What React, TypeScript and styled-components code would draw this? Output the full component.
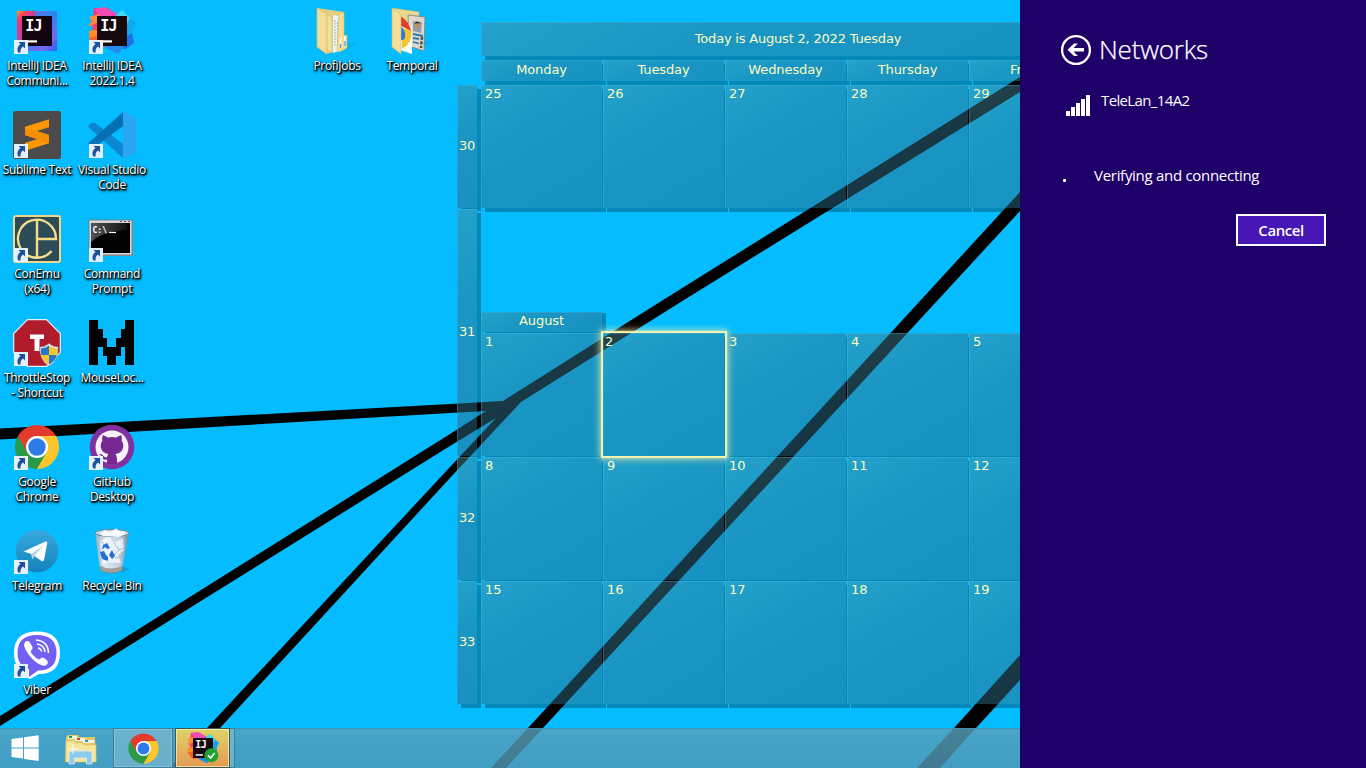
import React from 'react';
import styled, { createGlobalStyle, css } from 'styled-components';

const GlobalStyle = createGlobalStyle`
  * { box-sizing: border-box; }
  html, body { margin: 0; padding: 0; overflow: hidden; }
`;

const Screen = styled.div`
  position: relative;
  display: flex;
  width: 1366px;
  height: 768px;
  overflow: hidden;
  background: #04bcff;
  font-family: 'Open Sans', 'Noto Sans', sans-serif;
`;

const WallpaperArt = styled.svg`
  position: absolute;
  inset: 0;
`;

const Main = styled.div`
  position: relative;
  display: flex;
  flex-direction: column;
  width: 1020px;
  height: 768px;
  overflow: hidden;
`;

const Desktop = styled.div`
  display: flex;
  height: 728px;
`;

const IconGrid = styled.div<{ $rows: number; $width: number }>`
  display: grid;
  grid-auto-flow: column;
  grid-template-rows: repeat(${(p) => p.$rows}, 104px);
  grid-auto-columns: 74px;
  column-gap: 1px;
  flex: none;
  align-content: start;
  width: ${(p) => p.$width}px;
`;

const Shortcut = styled.div`
  display: flex;
  flex-direction: column;
  align-items: center;
  padding-top: 7px;
`;

const IconBox = styled.div`
  position: relative;
  width: 48px;
  height: 48px;
`;

const ArrowBadge = styled.svg`
  position: absolute;
  left: 1px;
  top: 33px;
`;

const Label = styled.div`
  margin-top: 3px;
  display: flex;
  flex-direction: column;
  align-items: center;
  color: #fff;
  font-size: 12px;
  line-height: 15px;
  white-space: nowrap;
  text-shadow: 1px 1px 1px #000, 1px 1px 2px #000, 0 1px 2px rgba(0, 0, 0, 0.85), 1px 2px 3px rgba(0, 0, 0, 0.8);
`;

const LabelLine = styled.span`
  letter-spacing: -0.3px;
`;

/* ---------- calendar ---------- */

const Calendar = styled.div`
  display: grid;
  grid-template-columns: 24px 634px;
  flex: none;
  height: 708px;
  margin-top: 22px;
  color: #fdfbc0;
  font: 13px/15px 'DejaVu Sans', Verdana, sans-serif;
`;

const glass = css`
  background: linear-gradient(150deg, rgba(68, 136, 150, 0.5), rgba(50, 114, 138, 0.5) 35%, rgba(40, 102, 130, 0.5));
  box-shadow: inset 1px 1px 0 rgba(90, 190, 225, 0.3);
`;

const WeekColumn = styled.div`
  display: flex;
  flex-direction: column;
  gap: 1px;
  padding-top: 63px;
`;

const WeekCell = styled.div<{ $height: number; $last?: boolean }>`
  ${glass}
  position: relative;
  display: flex;
  align-items: center;
  justify-content: center;
  width: 20px;
  height: ${(p) => p.$height}px;
  padding-bottom: 2px;
  letter-spacing: -0.3px;
  &::before {
    content: '';
    position: absolute;
    left: 20px;
    top: 4px;
    width: 4px;
    height: ${(p) => p.$height - 1}px;
    background: rgba(0, 0, 0, 0.27);
  }
  &::after {
    content: '';
    position: absolute;
    left: 4px;
    top: 100%;
    width: ${(p) => (p.$last ? 20 : 16)}px;
    height: ${(p) => (p.$last ? 4 : 1)}px;
    background: rgba(0, 0, 0, 0.27);
  }
  ${(p) => p.$last && css`&::before { height: 119px; }`}
`;

const Days = styled.div`
  display: flex;
  flex-direction: column;
`;

const TodayBar = styled.div`
  ${glass}
  position: relative;
  display: flex;
  align-items: center;
  justify-content: center;
  height: 34px;
  margin-bottom: 4px;
  padding-bottom: 2px;
  letter-spacing: -0.2px;
  &::after {
    content: '';
    position: absolute;
    left: 4px;
    top: 100%;
    right: 0;
    height: 4px;
    background: rgba(0, 0, 0, 0.27);
  }
`;

const Row = styled.div<{ $height: number }>`
  display: flex;
  gap: 1px;
  height: ${(p) => p.$height}px;
`;

const Cell = styled.div<{ $height: number; $drop: number; $head?: boolean; $today?: boolean }>`
  ${glass}
  position: relative;
  z-index: ${(p) => (p.$today ? 1 : 0)};
  flex: none;
  width: 121px;
  height: ${(p) => p.$height}px;
  padding: ${(p) => (p.$head ? '2px 0 0' : p.$today ? '1px 2px' : '1px 4px')};
  text-align: ${(p) => (p.$head ? 'center' : 'left')};
  letter-spacing: -0.1px;
  &::before {
    content: '';
    position: absolute;
    left: 121px;
    top: 4px;
    width: 1px;
    bottom: 0;
    background: rgba(0, 0, 0, 0.27);
  }
  &::after {
    content: '';
    position: absolute;
    left: 4px;
    top: 100%;
    width: 121px;
    height: ${(p) => p.$drop}px;
    background: rgba(0, 0, 0, 0.27);
  }
`;

const MonthTab = styled.div`
  ${glass}
  position: relative;
  width: 121px;
  height: 20px;
  margin: 100px 0 1px;
  padding-top: 1px;
  text-align: center;
  letter-spacing: -0.1px;
  &::before {
    content: '';
    position: absolute;
    left: 4px;
    top: 100%;
    width: 117px;
    height: 1px;
    background: rgba(0, 0, 0, 0.27);
  }
  &::after {
    content: '';
    position: absolute;
    left: 121px;
    top: 1px;
    width: 4px;
    height: 19px;
    background: rgba(0, 0, 0, 0.27);
  }
`;

const TodayGlow = styled.div`
  position: absolute;
  z-index: 1;
  inset: -1px -2px -1px -1px;
  border: 1px solid #fbf6ae;
  box-shadow: 0 0 1px 1px rgba(253, 248, 178, 0.8), 0 0 7px 2px rgba(255, 244, 170, 0.75);
`;

/* ---------- taskbar ---------- */

const Taskbar = styled.div`
  display: flex;
  height: 40px;
  background: linear-gradient(rgba(88, 160, 186, 0.81), rgba(80, 150, 180, 0.81));
  border-top: 1px solid #3f93b6;
`;

const StartButton = styled.div`
  width: 49px;
  padding: 6px 0 0 11px;
`;

const PinnedButton = styled.div`
  width: 64px;
  padding: 5px 0 0 15px;
`;

const RunningButton = styled.div`
  display: flex;
  align-items: center;
  justify-content: center;
  width: 60px;
  height: 40px;
  margin-top: -1px;
  border: 1px solid #397f9d;
  box-shadow: inset 0 0 0 1px rgba(160, 215, 235, 0.45);
  background: rgba(140, 190, 210, 0.55);
`;

const StackEdge = styled.div`
  display: flex;
  width: 60px;
  height: 40px;
  margin: -1px 0 0 2px;
  padding-right: 4px;
  border: 1px solid #397f9d;
  background: rgba(140, 190, 210, 0.6);
`;

const AlertButton = styled.div`
  display: flex;
  align-items: center;
  justify-content: center;
  flex: none;
  width: 55px;
  height: 40px;
  margin: -1px 0 0 -1px;
  border: 1px solid #3b5a5c;
  box-shadow: inset 0 0 0 1px rgba(255, 245, 180, 0.7);
  background: linear-gradient(#dcd468, #e4b35c 55%, #e39a52);
`;

/* ---------- networks panel ---------- */

const Panel = styled.aside`
  position: relative;
  width: 346px;
  height: 768px;
  padding: 34px 40px 0 40px;
  background: #1f0068;
  border-left: 1px solid #1a0758;
  color: #fff;
`;

const PanelHeader = styled.div`
  display: flex;
  align-items: center;
  height: 32px;
  gap: 7px;
  margin-left: -1px;
`;

const PanelTitle = styled.h1`
  margin: -3px 0 0;
  font-size: 26px;
  font-weight: 300;
  line-height: 32px;
  letter-spacing: -0.2px;
  -webkit-text-stroke: 0.25px #fff;
`;

const NetworkRow = styled.div`
  display: flex;
  gap: 11px;
  margin-top: 23px;
  padding-left: 5px;
  font-size: 15px;
  line-height: 22px;
  letter-spacing: -0.63px;
`;

const SignalBars = styled.svg`
  margin-top: 1px;
`;

const StatusRow = styled.div`
  display: flex;
  align-items: center;
  gap: 28px;
  margin-top: 48px;
  padding-left: 2px;
  font-size: 15px;
  line-height: 22px;
  letter-spacing: -0.29px;
`;

const ProgressDot = styled.span`
  width: 3px;
  height: 3px;
  margin-top: 11px;
  border-radius: 1px;
  background: #fff;
`;

const CancelButton = styled.button`
  display: block;
  width: 90px;
  height: 32px;
  margin: 28px 0 0 auto;
  padding: 0;
  border: 2px solid #fff;
  background: #4617b4;
  color: #fff;
  font: 600 15px/28px 'Open Sans', 'Noto Sans', sans-serif;
  letter-spacing: -0.45px;
`;

/* ---------- drawings ---------- */

const Picture = styled.svg`
  display: block;
`;

const Svg48 = ({ children }: { children: React.ReactNode }) => (
  <Picture width="48" height="48" viewBox="0 0 48 48">
    {children}
  </Picture>
);

const Wallpaper = () => (
  <WallpaperArt width="1020" height="768" viewBox="0 0 1020 768">
    <path d="M0 428.5L450 404L503 401L663 300L1020 77V92L684 300L521 402L450 478L220 728L183 768H169L207 728L450 467L496 418L450 446L0 726V716L450 434L486 411L450 413L0 439.5Z" />
    <path d="M1020 192L528 728L491 768H506L543 728L1020 211Z" />
    <path d="M1020 655L954 728L917 768H940L976 728L1020 680Z" />
  </WallpaperArt>
);

const Arrow = () => (
  <ArrowBadge width="14" height="14" viewBox="0 0 14 14">
    <rect width="14" height="14" fill="#e4f0fa" />
    <path d="M4.5 2H11V8.5L9 6.6C7 8 6.3 9.6 6.6 12.4H4.2C2.6 8.8 4 6 6.5 4Z" fill="#1c4f9c" />
  </ArrowBadge>
);

const IdeaMark = () => (
  <>
    <text x="12.3" y="24.2" fill="#fff" fontFamily="DejaVu Sans Mono" fontWeight="700" fontSize="15" letterSpacing="-0.8">IJ</text>
    <rect x="13" y="33.3" width="11" height="2.2" fill="#fff" />
  </>
);

const IdeaCommunity = () => (
  <Svg48>
    <defs>
      <linearGradient id="icA" x1="0" y1="0" x2="1" y2="1">
        <stop offset="0" stopColor="#ff9f1e" />
        <stop offset=".12" stopColor="#fb3d62" />
        <stop offset=".34" stopColor="#a33cc0" />
        <stop offset=".5" stopColor="#2a7ff0" />
        <stop offset=".78" stopColor="#7a68f0" />
        <stop offset="1" stopColor="#2a60f0" />
      </linearGradient>
    </defs>
    <rect x="4" y="4" width="40" height="40" fill="url(#icA)" />
    <path d="M22 4H44L39 9H22Z" fill="#2f8df6" opacity=".75" />
    <path d="M4 14L9 16V34L4 36Z" fill="#f0387a" opacity=".6" />
    <rect x="9" y="9" width="30" height="30" fill="#120410" />
    <IdeaMark />
  </Svg48>
);

const IdeaUltimateShape = () => (
  <>
    <path d="M6 1L21 1L19 14L2 18L5 10Z" fill="#fb2d84" />
    <path d="M1 10L14 6L12 18L0 19L4 14Z" fill="#ff8a3c" />
    <path d="M4 18L14 14V34L1 31L5 25Z" fill="#ff3d6e" />
    <path d="M1 24L12 22V36L1 31Z" fill="#ff8a22" />
    <path d="M16 0L32 8L20 18L6 2Z" fill="#f04cb4" />
    <path d="M1 31L14 28L22 40L8 40Z" fill="#ff5a2a" />
    <path d="M34 3L42 11L48 16L44 26L46 36L38 42L30 30V10Z" fill="#12a8ee" />
    <path d="M34 3L42 11L36 22L28 8Z" fill="#3adcf4" />
    <path d="M44 26L46 36L38 42L24 40Z" fill="#1c72e8" />
    <path d="M14 36L40 34L30 47L18 41Z" fill="#238df0" />
  </>
);

const IdeaUltimate = () => (
  <Svg48>
    <IdeaUltimateShape />
    <rect x="9" y="9" width="30" height="30" fill="#170a0e" />
    <IdeaMark />
  </Svg48>
);

const Sublime = () => (
  <Svg48>
    <rect width="48" height="48" rx="2.5" fill="#4b4b4b" />
    <path d="M12 15.700L36 8.300V16.300L23.700 20L36 24V32.300L12 39.700V31.700L24.300 28.300L12 24Z" fill="#ff9800" />
    <path d="M12 17V24L36 32.300V24L23.700 20Z" fill="#f58e00" />
  </Svg48>
);

const VsCode = () => (
  <Svg48>
    <path d="M2 17.500L35 47V33L7 12Q4.500 11 2 13L.5 14.500Q0 16 2 17.500Z" fill="#0a86d2" />
    <path d="M2 30.500L35 1V15L7 36Q4.500 37 2 35L.5 33.500Q0 32 2 30.500Z" fill="#0670b4" />
    <path d="M35 0L46 5.500Q48 6.500 48 8V40Q48 41.500 46 42.500L35 48Z" fill="#2aa5f0" />
  </Svg48>
);

const ConEmu = () => (
  <Svg48>
    <rect x="1" y="1" width="46" height="46" rx="2" fill="#2b4c57" stroke="#f2d78a" strokeWidth="2" />
    <path d="M24 5V43M24 24H43A19 19 0 1 0 38.500 36" fill="none" stroke="#f7dc8b" strokeWidth="2.400" />
  </Svg48>
);

const CommandPrompt = () => (
  <Svg48>
    <defs>
      <linearGradient id="cp" x1="0" y1="0" x2="1" y2="0">
        <stop offset="0" stopColor="#555" />
        <stop offset="1" stopColor="#111" />
      </linearGradient>
    </defs>
    <rect x="2" y="6" width="43" height="35" fill="#8f9499" />
    <rect x="1" y="5" width="43" height="35" fill="#d4d7da" stroke="#72777c" strokeWidth=".8" />
    <rect x="3" y="8" width="39" height="30" fill="#030303" />
    <path d="M3 8H39V15Q14 16 3 27Z" fill="url(#cp)" />
    <path d="M32 6.500H34M36 6.500H38M40 6.500H42" stroke="#556" strokeWidth="1.200" />
    <text x="4.500" y="17.500" fill="#fff" fontFamily="DejaVu Sans Mono" fontWeight="700" fontSize="8">C:\</text>
    <path d="M21 17.500H28" stroke="#fff" strokeWidth="1.200" />
  </Svg48>
);

const ThrottleStop = () => (
  <Svg48>
    <path d="M14.500 .7H33.500L47.300 14.500V33.500L33.500 47.300H14.500L.7 33.500V14.500Z" fill="#b01c2c" stroke="#e7edf3" strokeWidth="1.200" />
    <path d="M17 15.500H31V20H26.500V32H21.500V20H17Z" fill="#fff" />
    <path d="M36 24.500Q40 28 45 28Q46 41 36 47Q26 41 27 28Q32 28 36 24.500Z" fill="#e8eef4" stroke="#8b97a3" strokeWidth=".6" />
    <path d="M36 26.500V36H28.200Q27.600 32 28.300 29.200Q33 29 36 26.500ZM36 36H43.800Q42.500 42 36 45.500Z" fill="#2a74c8" />
    <path d="M36 26.500V36H43.800Q44.400 32 43.700 29.200Q39 29 36 26.500ZM36 36H28.200Q29.500 42 36 45.500Z" fill="#f6c72c" />
  </Svg48>
);

const MouseLocator = () => (
  <Svg48>
    <path d="M1 1H10V10H14.500V19H19V28H28V19H32.500V10H37V1H46V46H37V28H32.500V37H28V46H19V37H14.500V28H10V46H1Z" fill="#000" shapeRendering="crispEdges" />
  </Svg48>
);

const ChromeArt = () => (
  <>
    <path d="M24 24L24 13H43.050A22 22 0 0 1 24 46Z" fill="#fdc52c" />
    <path d="M24 24L33.500 29.500L24 46A22 22 0 0 1 4.950 13L14.500 29.500Z" fill="#2a9a46" />
    <path d="M24 13H43.050A22 22 0 0 0 4.950 13L14.500 29.500Z" fill="#e33b2e" />
    <circle cx="24" cy="24" r="11" fill="#fff" />
    <circle cx="24" cy="24" r="8.700" fill="#2c7be8" />
  </>
);

const Chrome = () => <Svg48><ChromeArt /></Svg48>;

const GitHub = () => (
  <Svg48>
    <circle cx="24" cy="24" r="22.300" fill="#82309f" />
    <circle cx="24" cy="24" r="16.500" fill="#f6f2f8" />
    <path d="M15 12L20 14.500Q24 13.500 28 14.500L33 12Q34.500 15 33.700 18Q36 21 35 25Q34 30 27.500 31Q29.300 33 29 41H19V36.500Q14.500 37.500 13 33Q12 31.500 11 31Q14 30.500 15.500 33Q17 35.200 19.200 34Q19.400 32 20.500 31Q14 30 13 25Q12 21 14.300 18Q13.500 15 15 12Z" fill="#762a91" />
  </Svg48>
);

const Telegram = () => (
  <Svg48>
    <defs>
      <linearGradient id="tg" x1="0" y1="0" x2="0" y2="1">
        <stop offset="0" stopColor="#36a9dd" />
        <stop offset="1" stopColor="#1583bd" />
      </linearGradient>
    </defs>
    <circle cx="24" cy="24" r="21.300" fill="url(#tg)" />
    <path d="M10.500 24.500L32.500 14.500Q34.500 14 34.200 16L31 33Q30.500 35 28.500 34L18.500 27Z" fill="#fff" />
    <path d="M18 27L30.500 18.500L21.500 29L19.500 32.500Z" fill="#b9d8ea" />
  </Svg48>
);

const RecycleBin = () => (
  <Svg48>
    <defs>
      <linearGradient id="rb" x1="0" y1="0" x2="1" y2="0">
        <stop offset="0" stopColor="#8fa9bd" />
        <stop offset=".3" stopColor="#dfe9f1" />
        <stop offset=".7" stopColor="#c3d3e0" />
        <stop offset="1" stopColor="#7089a0" />
      </linearGradient>
    </defs>
    <path d="M33 39L42 42L33 46Z" fill="#0783b5" opacity=".5" />
    <path d="M7 5L12 42Q23 47 34 42L41 5Z" fill="url(#rb)" />
    <ellipse cx="24" cy="6" rx="17" ry="3.500" fill="#c8d6e1" stroke="#6f8798" />
    <path d="M12 7L16 3L22 5L28 1.500L32 4.500L36 4L38 7L31 10L15 9Z" fill="#f5f9fc" />
    <path d="M12 14L21 10L26 16L35 11L36 23L30 28L33 36L20 35L14 38Z" fill="#f7fafd" opacity=".75" />
    <path d="M26 16L31 23L25 29M31 23L36 21M13 14L17 19M27 31L34 30" stroke="#a8bccd" fill="none" />
    <path d="M12 39.500Q23 44.500 34.500 39.500L34 43.500Q23 48.500 12.500 43.500Z" fill="#a4a19b" stroke="#6d7778" strokeWidth=".5" />
    <path d="M15 18L19 16L22 21L19 22L17 20L14 23ZM24 23L27 29L24 32L21 28ZM12 25L16 24L18 28L20 30V34L14 32Z" fill="#276fd8" />
  </Svg48>
);

const Viber = () => (
  <Svg48>
    <path d="M24 .5Q47 .5 47 22Q47 43 26 43L17 48Q12 47 13 41Q1 38 1 22Q1 .5 24 .5Z" fill="#fff" />
    <path d="M24 4Q43.500 4 43.500 22Q43.500 39.500 25 39.500L16 46V38Q4.500 35 4.500 22Q4.500 4 24 4Z" fill="#7360f2" />
    <path d="M12 11Q14.500 9 16.500 11L19.500 16Q20 18 18 19.500Q17 20.500 20 24Q23 27.500 26 28.500L29 26.500Q31 26 34.500 30Q36 33 31.500 35Q26 34.500 19 27.500Q12 20 11 14Z" fill="#fff" />
    <path d="M23 9Q35 10 35.500 22M24 13Q31.500 14 32 21M25 17Q28 17.500 28.500 20.500" fill="none" stroke="#fff" strokeWidth="1.500" />
  </Svg48>
);

const FolderFiles = () => (
  <Svg48>
    <path d="M33 36L44 36L33 43Z" fill="#079edb" opacity=".35" />
    <path d="M4 1L31 5V30L23 44L13 47L4 40Z" fill="#e4cf80" />
    <path d="M4 1L14 7V47L4 40Z" fill="#f3dd92" stroke="#d0b868" strokeWidth=".6" />
    <path d="M14 7L19 10V46L14 43Z" fill="#f3e09a" stroke="#cfb869" strokeWidth=".6" />
    <path d="M20 8L26 9V44L20 46Z" fill="#eff2f5" />
    <path d="M22 13V40M24.500 15V37" stroke="#9dafc0" strokeDasharray="2 1" />
    <path d="M26 5L31 5.500V29L34 28V41L26 45L24 43Z" fill="#f3dd8e" stroke="#d0b868" strokeWidth=".6" />
    <path d="M27.500 31V41M32 29V39" stroke="#f7fbff" strokeWidth="1.800" />
    <path d="M27.500 37V41M32 34V39" stroke="#4e9ede" strokeWidth="1.300" />
  </Svg48>
);

const FolderPhotos = () => (
  <Svg48>
    <path d="M36 34L44 34L37 39Z" fill="#079edb" opacity=".35" />
    <path d="M4 1L31 5V20L13 30Z" fill="#ead88e" stroke="#d0b868" strokeWidth=".5" />
    <path d="M20 8L37 10L36 44L21 39Z" fill="#ded8cb" stroke="#7a7f7e" strokeWidth=".8" />
    <path d="M25 14L34 15L33 26L25 24Z" fill="#8ba0ae" />
    <circle cx="29.500" cy="18.500" r="3" fill="#c38c6d" />
    <path d="M26.500 17Q29 12 32.500 17L29.500 16Z" fill="#2a211c" />
    <path d="M25 27L35 29M25 31L31 32M25 35L31 36.500" stroke="#2c7ab0" strokeWidth="1.800" />
    <path d="M34 30L33 41" stroke="#4a4f52" strokeWidth="2.500" strokeDasharray="3 1.500" />
    <path d="M12 9L24 20V47L12 43Z" fill="#fdfdfd" />
    <path d="M13 9.500Q21 14 23.500 25L13 19Z" fill="#e23d2c" />
    <path d="M16 20L23.500 24Q24.500 36 14 42V34Q18 31 16 20Z" fill="#f8c52d" />
    <path d="M13 20Q18 22 17 31Q15 34 13 33Z" fill="#2d79d8" />
    <path d="M4 1L13 8V47L4 40Z" fill="#f3e09a" stroke="#d0b868" strokeWidth=".6" />
  </Svg48>
);

const WindowsLogo = () => (
  <svg width="28" height="27" viewBox="0 0 28 27">
    <path d="M.5 4L12 2.500V12.500H.5ZM13 2.300L27.700 .2V12.500H13ZM.5 13.500H12V23.500L.5 22ZM13 13.500H27.700V26L13 24Z" fill="#fff" />
  </svg>
);

const ExplorerArt = () => (
  <svg width="34" height="31" viewBox="0 0 34 31">
    <path d="M2 3L4 1H14L15 3H31L32.500 28H1Z" fill="#e5c868" />
    <path d="M4 2H13V5H4Z" fill="#f7f4dd" />
    <path d="M5 2H8V4H5Z" fill="#19a33d" />
    <path d="M11 4H21V7H11Z" fill="#f8f4e0" />
    <path d="M13 4H16V6H13Z" fill="#d5422d" />
    <path d="M19 6H30V9H19Z" fill="#f8f4e0" />
    <path d="M21 6H24V8H21Z" fill="#2a90d8" />
    <path d="M2 7H10L12 9H18L20 11H32V28H2Z" fill="#f8e59c" stroke="#dfc16a" strokeWidth=".6" />
    <path d="M5 30V20Q5 17 8 17H25Q28 17 28 20V30H22.500V24H10.500V30Z" fill="#8ccbeb" stroke="#d8f1fb" strokeWidth=".8" />
    <path d="M9 10V20M4 15H14" stroke="#fff" strokeWidth="1" opacity=".85" />
  </svg>
);

type Item = { lines: string[]; art: React.ReactNode; arrow?: boolean };

const apps: Item[] = [
  { lines: ['IntelliJ IDEA', 'Communi...'], art: <IdeaCommunity />, arrow: true },
  { lines: ['Sublime Text'], art: <Sublime />, arrow: true },
  { lines: ['ConEmu', '(x64)'], art: <ConEmu />, arrow: true },
  { lines: ['ThrottleStop', '- Shortcut'], art: <ThrottleStop />, arrow: true },
  { lines: ['Google', 'Chrome'], art: <Chrome />, arrow: true },
  { lines: ['Telegram'], art: <Telegram />, arrow: true },
  { lines: ['Viber'], art: <Viber />, arrow: true },
  { lines: ['IntelliJ IDEA', '2022.1.4'], art: <IdeaUltimate />, arrow: true },
  { lines: ['Visual Studio', 'Code'], art: <VsCode />, arrow: true },
  { lines: ['Command', 'Prompt'], art: <CommandPrompt />, arrow: true },
  { lines: ['MouseLoc...'], art: <MouseLocator /> },
  { lines: ['GitHub', 'Desktop'], art: <GitHub />, arrow: true },
  { lines: ['Recycle Bin'], art: <RecycleBin /> },
];

const folders: Item[] = [
  { lines: ['ProfiJobs'], art: <FolderFiles /> },
  { lines: ['Temporal'], art: <FolderPhotos /> },
];

const DesktopIcon = ({ item }: { item: Item }) => (
  <Shortcut>
    <IconBox>
      {item.art}
      {item.arrow && <Arrow />}
    </IconBox>
    <Label>
      {item.lines.map((line) => (
        <LabelLine key={line}>{line}</LabelLine>
      ))}
    </Label>
  </Shortcut>
);

const dayNames = ['Monday', 'Tuesday', 'Wednesday', 'Thursday', 'Friday'];
const weeks = [
  [1, 2, 3, 4, 5],
  [8, 9, 10, 11, 12],
  [15, 16, 17, 18, 19],
];

export default function App() {
  return (
    <>
      <GlobalStyle />
      <Screen>
        <Wallpaper />
        <Main>
          <Desktop>
            <IconGrid $rows={7} $width={300}>
              {apps.map((item, i) => <DesktopIcon key={i} item={item} />)}
            </IconGrid>
            <IconGrid $rows={1} $width={157}>
              {folders.map((item, i) => <DesktopIcon key={i} item={item} />)}
            </IconGrid>
            <Calendar>
              <WeekColumn>
                <WeekCell $height={123}>30</WeekCell>
                <WeekCell $height={247}>31</WeekCell>
                <WeekCell $height={123}>32</WeekCell>
                <WeekCell $height={123} $last>33</WeekCell>
              </WeekColumn>
              <Days>
                <TodayBar>Today is August 2, 2022 Tuesday</TodayBar>
                <Row $height={25}>
                  {dayNames.map((d) => <Cell key={d} $head $height={21} $drop={4}>{d}</Cell>)}
                </Row>
                <Row $height={127}>
                  {[25, 26, 27, 28, 29].map((d) => <Cell key={d} $height={123} $drop={4}>{d}</Cell>)}
                </Row>
                <MonthTab>August</MonthTab>
                {weeks.map((week, w) => (
                  <Row key={w} $height={124}>
                    {week.map((d) => (
                      <Cell key={d} $height={123} $drop={w === 2 ? 4 : 1} $today={d === 2}>
                        {d}
                        {d === 2 && <TodayGlow />}
                      </Cell>
                    ))}
                  </Row>
                ))}
              </Days>
            </Calendar>
          </Desktop>
          <Taskbar>
            <StartButton><WindowsLogo /></StartButton>
            <PinnedButton><ExplorerArt /></PinnedButton>
            <RunningButton>
              <svg width="33" height="33" viewBox="0 0 48 48"><ChromeArt /></svg>
            </RunningButton>
            <StackEdge>
              <AlertButton>
                <svg width="32" height="32" viewBox="0 0 48 48">
                  <IdeaUltimateShape />
                  <rect x="9" y="9" width="30" height="30" fill="#170a0e" />
                  <IdeaMark />
                  <circle cx="36.500" cy="35" r="10.500" fill="#1fa22e" />
                  <path d="M31.500 35L35.500 39L41.500 31.500" fill="none" stroke="#fff" strokeWidth="2.500" />
                </svg>
              </AlertButton>
            </StackEdge>
          </Taskbar>
        </Main>
        <Panel>
          <PanelHeader>
            <svg width="32" height="32" viewBox="0 0 32 32">
              <circle cx="16" cy="16" r="13.900" fill="none" stroke="#fff" strokeWidth="2.300" />
              <path d="M7.500 15.700L14 9.500H18L13.500 14H24V17.500H13.500L18 22H14Z" fill="#fff" />
            </svg>
            <PanelTitle>Networks</PanelTitle>
          </PanelHeader>
          <NetworkRow>
            <SignalBars width="24" height="26" viewBox="0 0 24 26">
              <path d="M0 21H4V26H0ZM5 17H9V26H5ZM10 13H14V26H10ZM15 9H19V26H15ZM20 5H24V26H20Z" fill="#fff" />
            </SignalBars>
            <span>TeleLan_14A2</span>
          </NetworkRow>
          <StatusRow>
            <ProgressDot />
            <span>Verifying and connecting</span>
          </StatusRow>
          <CancelButton>Cancel</CancelButton>
        </Panel>
      </Screen>
    </>
  );
}
